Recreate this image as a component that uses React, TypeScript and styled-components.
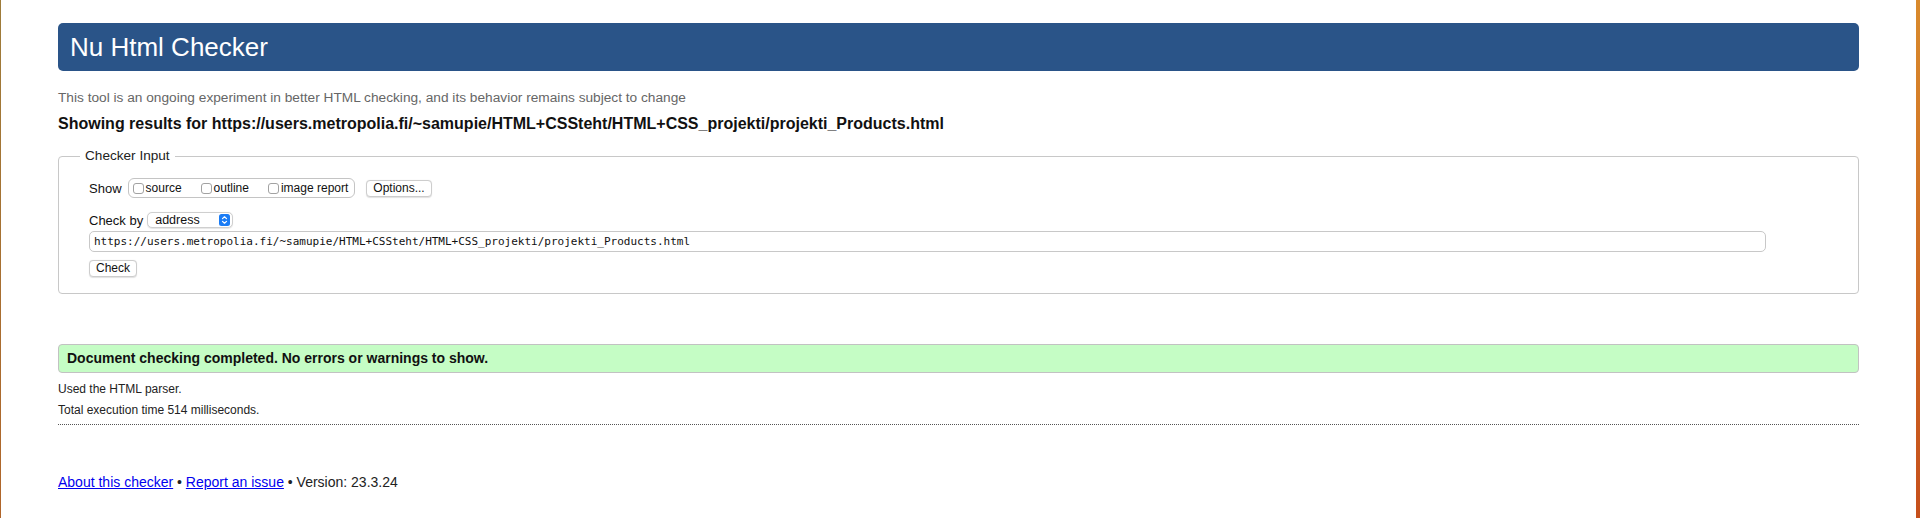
import React from "react";
import styled, { createGlobalStyle } from "styled-components";

const Global = createGlobalStyle`
  html, body { margin: 0; padding: 0; background: #fff; }
  body {
    font-family: "Liberation Sans", Arial, Helvetica, sans-serif;
    color: #111;
  }
  * { box-sizing: border-box; }
`;

const Frame = styled.div`
  display: flex;
  min-height: 518px;
`;

const Edge = styled.div<{ $w: number; $top: string; $bottom: string }>`
  flex: 0 0 ${(p) => p.$w}px;
  background: linear-gradient(to bottom, ${(p) => p.$top}, ${(p) => p.$bottom});
`;

const Page = styled.main`
  flex: 1;
  min-width: 0;
  padding: 23px 57px 0;
  background: #fff;
`;

const Banner = styled.h1`
  margin: 0;
  height: 48px;
  padding: 0 12px;
  background: #2a5488;
  color: #fff;
  border-radius: 5px;
  font-size: 26px;
  font-weight: normal;
  line-height: 48px;
`;

const Tagline = styled.p`
  margin: 19px 0 0;
  font-size: 13.7px;
  line-height: 16px;
  color: #666;
`;

const ResultsFor = styled.h2`
  margin: 8px 0 0;
  font-size: 16px;
  line-height: 20px;
  font-weight: bold;
  color: #111;
`;

const Fieldset = styled.fieldset`
  margin: 14px 0 0;
  padding: 14px 30px 16px;
  border: 1px solid #c8c8c8;
  border-radius: 4px;
  min-width: 0;
`;

const Legend = styled.legend`
  margin-left: -9px;
  padding: 0 5px;
  font-size: 13.6px;
  line-height: 16px;
  color: #222;
`;

const Controls = styled.div`
  display: flex;
  flex-direction: column;
  align-items: flex-start;
`;

const Row = styled.div<{ $h: number; $gap?: number }>`
  display: flex;
  align-items: center;
  height: ${(p) => p.$h}px;
  margin-top: ${(p) => p.$gap ?? 0}px;
`;

const FieldLabel = styled.span<{ $gap: number }>`
  font-size: 13px;
  color: #111;
  margin-right: ${(p) => p.$gap}px;
`;

const ToggleGroup = styled.div`
  display: flex;
  align-items: center;
  height: 20px;
  border: 1px solid #c4c4c4;
  border-radius: 6px;
  padding: 0 6px 0 4px;
`;

const Toggle = styled.label`
  display: flex;
  align-items: center;
  font-size: 12px;
  color: #111;
  & + & {
    margin-left: 19px;
  }
`;

const Box = styled.input.attrs({ type: "checkbox" })`
  appearance: none;
  width: 11px;
  height: 11px;
  margin: 0 2px 0 0;
  border: 1px solid #a2a2a2;
  border-radius: 3px;
  background: #fff;
`;

const SmallButton = styled.button<{ $gap?: number }>`
  height: 17px;
  margin-left: ${(p) => p.$gap ?? 0}px;
  padding: 0 6px;
  border: 1px solid #cdcdcd;
  border-radius: 4px;
  background: #fff;
  box-shadow: 0 0.5px 1px rgba(0, 0, 0, 0.12);
  font-family: "Liberation Sans", Arial, sans-serif;
  font-size: 12px;
  line-height: 15px;
  color: #111;
`;

const SelectShell = styled.div`
  display: flex;
  align-items: center;
  width: 86px;
  height: 16px;
  padding: 0 2px 0 7px;
  border: 1px solid #cfcfcf;
  border-radius: 5px;
  background: #fff;
  box-shadow: 0 0.5px 1px rgba(0, 0, 0, 0.1);
`;

const Select = styled.select`
  appearance: none;
  flex: 1;
  min-width: 0;
  border: none;
  background: transparent;
  padding: 0;
  font-family: "Liberation Sans", Arial, sans-serif;
  font-size: 12.5px;
  line-height: 14px;
  color: #111;
  outline: none;
`;

const UrlInput = styled.input`
  display: block;
  width: calc(100% - 62px);
  height: 21px;
  margin-top: 3px;
  padding: 0 4px;
  border: 1px solid #c8c8c8;
  border-radius: 5px;
  font-family: "DejaVu Sans Mono", "Liberation Mono", monospace;
  font-size: 11px;
  color: #111;
  background: #fff;
`;

const Success = styled.div`
  margin-top: 50px;
  height: 29px;
  padding: 0 8px;
  border: 1px solid #c2c2c2;
  border-radius: 4px;
  background: #c5fdc5;
  font-size: 14px;
  font-weight: bold;
  line-height: 27px;
  color: #111;
`;

const Note = styled.p<{ $gap: number }>`
  margin: ${(p) => p.$gap}px 0 0;
  font-size: 12px;
  line-height: 16px;
  color: #222;
`;

const DottedRule = styled.hr`
  margin: 6px 0 0;
  border: none;
  border-top: 1px dotted #555;
  height: 0;
`;

const Footer = styled.footer`
  margin-top: 48px;
  font-size: 14px;
  line-height: 18px;
  color: #222;
`;

const Link = styled.a`
  color: #0000ee;
  text-decoration: underline;
`;

const Stepper = () => (
  <svg width="11" height="12" viewBox="0 0 11 12" aria-hidden="true">
    <rect x="0" y="0" width="11" height="12" rx="2.5" fill="#1a7cf5" />
    <path d="M3.5 4.6 L5.5 2.8 L7.5 4.6" fill="none" stroke="#fff" strokeWidth="1.2" strokeLinecap="round" strokeLinejoin="round" />
    <path d="M3.5 7.4 L5.5 9.2 L7.5 7.4" fill="none" stroke="#fff" strokeWidth="1.2" strokeLinecap="round" strokeLinejoin="round" />
  </svg>
);

const url =
  "https://users.metropolia.fi/~samupie/HTML+CSSteht/HTML+CSS_projekti/projekti_Products.html";

export default function App() {
  return (
    <>
      <Global />
      <Frame>
        <Edge $w={1} $top="#9e7c3a" $bottom="#b0652a" />
        <Page>
          <Banner>Nu Html Checker</Banner>
          <Tagline>
            This tool is an ongoing experiment in better HTML checking, and its behavior remains subject to change
          </Tagline>
          <ResultsFor>Showing results for {url}</ResultsFor>
          <Fieldset>
            <Legend>Checker Input</Legend>
            <Controls>
              <Row $h={20}>
                <FieldLabel $gap={6}>Show</FieldLabel>
                <ToggleGroup>
                  <Toggle>
                    <Box />
                    source
                  </Toggle>
                  <Toggle>
                    <Box />
                    outline
                  </Toggle>
                  <Toggle>
                    <Box />
                    image report
                  </Toggle>
                </ToggleGroup>
                <SmallButton type="button" $gap={11}>
                  Options...
                </SmallButton>
              </Row>
              <Row $h={16} $gap={14}>
                <FieldLabel $gap={4}>Check by</FieldLabel>
                <SelectShell>
                  <Select defaultValue="address">
                    <option value="address">address</option>
                    <option value="file">file upload</option>
                    <option value="text">text input</option>
                  </Select>
                  <Stepper />
                </SelectShell>
              </Row>
            </Controls>
            <UrlInput type="url" defaultValue={url} />
            <Controls>
              <Row $h={17} $gap={8}>
                <SmallButton type="submit">Check</SmallButton>
              </Row>
            </Controls>
          </Fieldset>
          <Success>Document checking completed. No errors or warnings to show.</Success>
          <Note $gap={8}>Used the HTML parser.</Note>
          <Note $gap={5}>Total execution time 514 milliseconds.</Note>
          <DottedRule />
          <Footer>
            <Link href="#about">About this checker</Link> • <Link href="#report">Report an issue</Link> • Version:
            23.3.24
          </Footer>
        </Page>
        <Edge $w={4} $top="#d98a2c" $bottom="#c64f1b" />
      </Frame>
    </>
  );
}
